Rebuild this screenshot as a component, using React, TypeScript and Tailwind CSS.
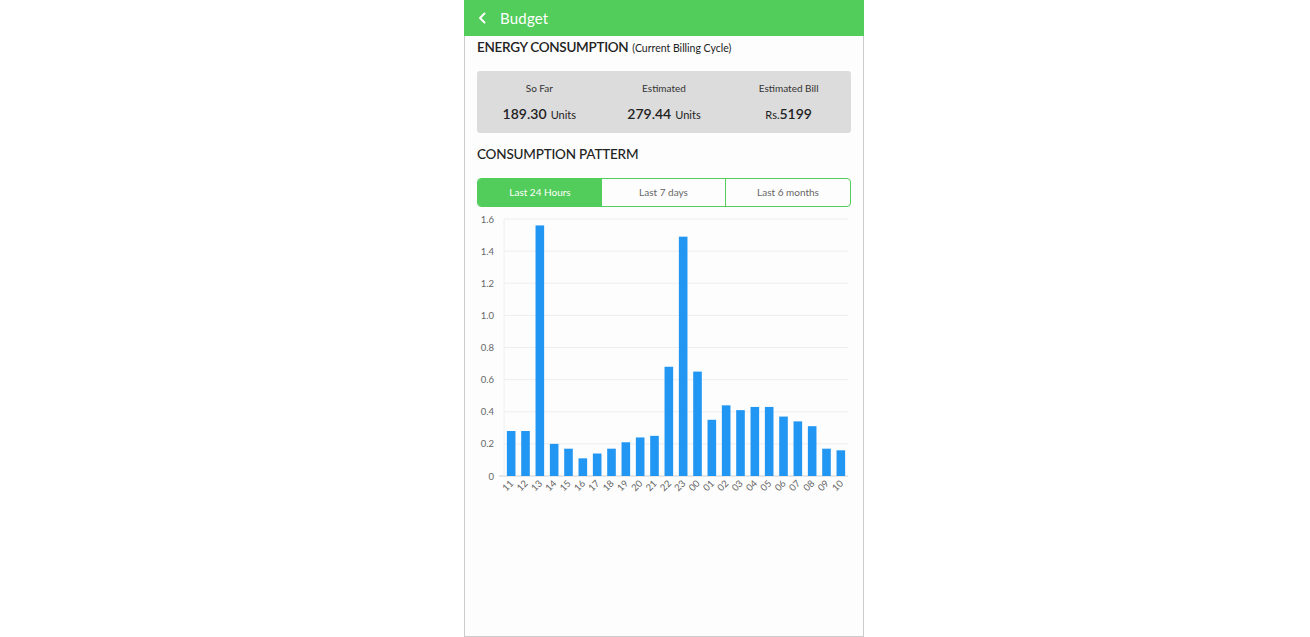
import React from "react";

const labels = ["11","12","13","14","15","16","17","18","19","20","21","22","23","00","01","02","03","04","05","06","07","08","09","10"];
const values = [0.28,0.28,1.56,0.2,0.17,0.11,0.14,0.17,0.21,0.24,0.25,0.68,1.49,0.65,0.35,0.44,0.41,0.43,0.43,0.37,0.34,0.31,0.17,0.16];

function Chart() {
  const left = 40;
  const right = 384;
  const y0 = 266;
  const top = 9;
  const scale = (y0 - top) / 1.6;
  const slot = (right - left) / labels.length;
  const bw = slot * 0.6;
  const ticks = [0, 0.2, 0.4, 0.6, 0.8, 1.0, 1.2, 1.4, 1.6];
  return (
    <svg width="400" height="290" viewBox="0 0 400 290" className="block">
      {ticks.map((t) => {
        const y = y0 - t * scale;
        return (
          <g key={t}>
            <line x1={t === 0 ? 35 : left} x2={right} y1={y} y2={y} stroke={t === 0 ? "#cfcfcf" : "#eeeeee"} strokeWidth="1" />
            <text x={30} y={y + 3.5} textAnchor="end" fontSize="9.5" fill="#666" fontFamily="Lato, 'Open Sans', sans-serif">
              {t === 0 ? "0" : t.toFixed(1)}
            </text>
          </g>
        );
      })}
      <line x1={left} x2={left} y1={top} y2={y0} stroke="#eeeeee" strokeWidth="1" />
      {values.map((v, i) => {
        const cx = left + slot * (i + 0.5);
        const h = v * scale;
        return (
          <rect key={i} x={cx - bw / 2} y={y0 - h} width={bw} height={h} fill="#2196f3" />
        );
      })}
      {labels.map((l, i) => {
        const cx = left + slot * (i + 0.5);
        const ty = y0 + 8;
        return (
          <text
            key={l}
            x={cx + 3}
            y={ty}
            textAnchor="end"
            fontSize="9.5"
            fill="#666"
            fontFamily="Lato, 'Open Sans', sans-serif"
            transform={`rotate(-45 ${cx + 3} ${ty})`}
          >
            {l}
          </text>
        );
      })}
    </svg>
  );
}

export default function App() {
  return (
    <div className="w-[1310px] h-[637px] bg-white" style={{ fontFamily: "Lato, 'Open Sans', sans-serif" }}>
      <div className="ml-[464px] w-[400px] h-[637px] border-x border-b border-[#cccccc] bg-[#fdfdfd] flex flex-col">
        <div className="h-[36px] bg-[#52cc5a] flex items-center text-white -mx-px">
          <svg width="14" height="14" viewBox="0 0 14 14" className="ml-[12px]">
            <path d="M8.5 2.5 L4 7 L8.5 11.5" stroke="white" strokeWidth="2" fill="none" strokeLinecap="round" strokeLinejoin="round" />
          </svg>
          <span className="ml-[10px] text-[15px] tracking-[0.2px]">Budget</span>
        </div>
        <div className="px-[12px]">
          <div className="mt-[1px] flex items-baseline text-[#222]">
            <span className="text-[13.5px] font-semibold tracking-[-0.3px]">ENERGY CONSUMPTION</span>
            <span className="ml-[4px] text-[10.5px]">(Current Billing Cycle)</span>
          </div>
          <div className="mt-[14px] h-[62px] bg-[#dcdcdc] rounded-[3px] grid grid-cols-3 text-[#222]">
            <div className="flex flex-col items-center pt-[10px]">
              <span className="text-[10px] text-[#333]">So Far</span>
              <span className="mt-[9px] leading-none"><span className="text-[14px] font-semibold">189.30</span> <span className="text-[11px]">Units</span></span>
            </div>
            <div className="flex flex-col items-center pt-[10px]">
              <span className="text-[10px] text-[#333]">Estimated</span>
              <span className="mt-[9px] leading-none"><span className="text-[14px] font-semibold">279.44</span> <span className="text-[11px]">Units</span></span>
            </div>
            <div className="flex flex-col items-center pt-[10px]">
              <span className="text-[10px] text-[#333]">Estimated Bill</span>
              <span className="mt-[9px] leading-none"><span className="text-[11px]">Rs.</span><span className="text-[14px] font-semibold">5199</span></span>
            </div>
          </div>
          <div className="mt-[11px] text-[13.5px] font-medium text-[#222] tracking-[-0.2px]">CONSUMPTION PATTERM</div>
          <div className="mt-[13px] h-[29px] border border-[#52cc5a] rounded-[4px] grid grid-cols-3 overflow-hidden text-[10px]">
            <div className="bg-[#52cc5a] text-white flex items-center justify-center">Last 24 Hours</div>
            <div className="border-r border-[#52cc5a] text-[#666] flex items-center justify-center">Last 7 days</div>
            <div className="text-[#666] flex items-center justify-center">Last 6 months</div>
          </div>
        </div>
        <div className="mt-[3px] -ml-px">
          <Chart />
        </div>
      </div>
    </div>
  );
}
